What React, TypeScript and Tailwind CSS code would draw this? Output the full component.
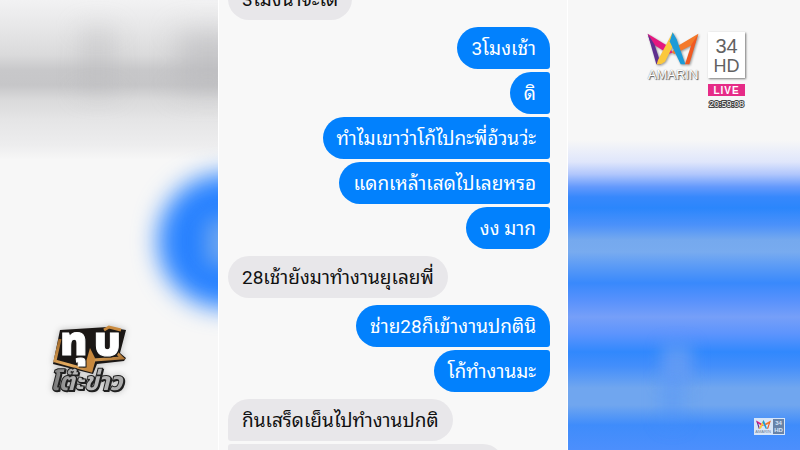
import clsx from "clsx"

type Message = {
    text: string
    mine?: boolean
    joinTop?: boolean
    joinBottom?: boolean
}

const groups: Message[][] = [
    [{ text: "3โมงน่าจะได้" }],
    [
        { text: "3โมงเช้า", mine: true, joinBottom: true },
        { text: "ดิ", mine: true, joinTop: true, joinBottom: true },
        { text: "ทำไมเขาว่าโก้ไปกะพี่อ้วนว่ะ", mine: true, joinTop: true, joinBottom: true },
        { text: "แดกเหล้าเสดไปเลยหรอ", mine: true, joinTop: true, joinBottom: true },
        { text: "งง มาก", mine: true, joinTop: true },
    ],
    [{ text: "28เช้ายังมาทำงานยุเลยพี่" }],
    [
        { text: "ช่าย28ก็เข้างานปกตินิ", mine: true, joinBottom: true },
        { text: "โก้ทำงานมะ", mine: true, joinTop: true },
    ],
    [{ text: "กินเสร็ดเย็นไปทำงานปกติ", joinBottom: true }],
]

function Bubble({ text, mine, joinTop, joinBottom }: Message) {
    return (
        <li
            className={clsx(
                "flex h-[42px] items-center rounded-[21px] px-[14px] pt-[2px] whitespace-nowrap",
                mine ? "self-end bg-[#0281fd] text-white" : "self-start bg-[#e8e7ea] text-[#111111]",
                mine && joinTop && "rounded-tr-[3px]",
                mine && joinBottom && "rounded-br-[3px]",
                !mine && joinTop && "rounded-tl-[3px]",
                !mine && joinBottom && "rounded-bl-[3px]",
            )}
        >
            {text}
        </li>
    )
}

function Chat() {
    return (
        <main className="overflow-hidden border-x border-white bg-[#f8f8f8] pr-[17px] pl-[9px]">
            <div className="-mt-[22px] flex flex-col gap-[7px] text-[19px] leading-[24px]">
                {groups.map((group, i) => (
                    <ul key={i} className="flex flex-col gap-[3px]">
                        {group.map((m) => (
                            <Bubble key={m.text} {...m} />
                        ))}
                        {i === groups.length - 1 && (
                            <li className="h-[42px] w-[276px] rounded-[21px] rounded-tl-[3px] bg-[#e8e7ea]" />
                        )}
                    </ul>
                ))}
            </div>
        </main>
    )
}

function Crown({ className }: { className: string }) {
    return (
        <svg viewBox="24 24 156 94" preserveAspectRatio="none" className={className} aria-hidden="true">
            <path d="M26 29 L90 66 L101 83 L88 86 L34 54Z" fill="#e5177f" />
            <path d="M178 29 L112 66 L98 82 L106 87 L168 57Z" fill="#f47a2b" />
            <path d="M26 29 L47 60 L66 116 L52 116Z" fill="#5f2f8f" />
            <path d="M178 29 L157 60 L138 116 L151 116Z" fill="#f05a22" />
            <path d="M66 116 L78 109 L109 50 L101 25 L57 104 L53 116Z" fill="#fbc83d" />
            <path d="M101 25 L113 45 L139 116 L125 116 L92 51Z" fill="#1c9bd8" />
        </svg>
    )
}

function ChannelLogo() {
    return (
        <div className="absolute top-[32px] right-[55px] flex gap-2 font-['Liberation_Sans',sans-serif]">
            <div className="flex w-[54px] flex-col items-center">
                <Crown className="h-[33px] w-[52px] drop-shadow-[1px_1px_1px_#999999]" />
                <span className="mt-px text-[13px] leading-[18px] text-white [text-shadow:1px_1px_1px_#555555,0_0_1px_#777777]">AMARIN</span>
            </div>
            <div className="flex w-[37px] flex-col items-center">
                <div className="flex h-[46px] w-full flex-col items-center justify-center bg-white text-[#626262] shadow-[1px_1px_2px_#777777]">
                    <span className="text-[20px] leading-[22px]">34</span>
                    <span className="text-[18px] leading-[18px]">HD</span>
                </div>
                <span className="mt-[6px] flex h-[12px] w-full items-center justify-center bg-[#e62b87] text-[10px] font-bold tracking-widest text-white">LIVE</span>
                <time className="mt-[2px] text-[9px] leading-[12px] text-white [paint-order:stroke] [-webkit-text-stroke:2px_#444444]">20:59:08</time>
            </div>
        </div>
    )
}

function ShowLogo() {
    return (
        <svg
            viewBox="0 0 95 85"
            className="absolute bottom-[50px] left-[40px] w-[95px] font-['Noto_Sans_Thai','Noto_Sans',sans-serif] drop-shadow-[0_0_3px_#bbbbbb]"
        >
            <defs>
                <linearGradient id="gold" x1="0" y1="0" x2="1" y2="1">
                    <stop offset="0" stopColor="#9c6425" />
                    <stop offset="0.5" stopColor="#e6ad61" />
                    <stop offset="1" stopColor="#8e561d" />
                </linearGradient>
                <linearGradient id="steel" x1="0" y1="0" x2="1" y2="0">
                    <stop offset="0" stopColor="#707070" />
                    <stop offset="0.4" stopColor="#c0c0c0" />
                    <stop offset="1" stopColor="#aaaaaa" />
                </linearGradient>
            </defs>
            <path d="M20 15 L68 12 L86 15 L80 38 L86 43 L84 46 L57 49 L53 59 L13 49Z" fill="#1b1715" />
            <path d="M20 24 L15 46 L51 56 L54 45 L82 43 L76 37" fill="none" stroke="url(#gold)" strokeWidth="3" />
            <path d="M64 15 L69 12 L81 15" fill="none" stroke="#c98a3f" strokeWidth="3" />
            <path d="M50 33 L55 43 L52 57 L44 54Z" fill="#c8883d" />
            <text
                x="20"
                y="40"
                fontSize="41"
                fontWeight="900"
                fill="white"
                stroke="white"
                className="drop-shadow-[1px_1px_0_#171717]"
            >
                ทุ<tspan x="54">บ</tspan>
            </text>
            <text x="10" y="75" fontSize="25" fontWeight="700" fontStyle="italic" fill="url(#steel)" stroke="#202020" strokeWidth="2" paintOrder="stroke" className="drop-shadow-[1px_1px_0_#202020]">โต๊ะข่าว</text>
        </svg>
    )
}

function Watermark() {
    return (
        <div className="absolute right-[15px] bottom-[15px] flex h-[17px] w-[31px] bg-[#d8e6f8] font-['Liberation_Sans',sans-serif] text-[#6d7f99]">
            <div className="flex flex-1 flex-col items-center justify-center">
                <Crown className="h-[9px] w-[15px]" />
                <span className="text-[4px] leading-[5px]">AMARIN</span>
            </div>
            <div className="m-px flex w-[11px] flex-col items-center justify-center bg-[#6883a8] text-[6px] leading-[7px] font-bold text-[#d8e6f8]">
                <span>34</span>
                <span>HD</span>
            </div>
        </div>
    )
}

export default function App() {
    return (
        <div
            lang="th"
            className="relative grid h-screen grid-cols-[218fr_350fr_232fr] overflow-hidden bg-[#f7f7f7] font-[Roboto,'Noto_Sans_Thai_Looped','Noto_Looped_Thai',Loma,Garuda,Waree,Umpush,'Droid_Sans_Thai','Noto_Serif_Thai',serif]"
        >
            {/* out of focus enlargement of the chat behind both sides */}
            <div className="relative overflow-hidden bg-[linear-gradient(#f2f2f3_0px,#e6e6e7_30px,#dadadb_55px,#c8c8ca_70px,#c6c6c8_85px,#dadadb_100px,#e5e5e6_120px,#ededee_145px,#f7f7f7_160px)]">
                <div className="absolute top-[28px] left-[80px] h-[65px] w-[36px] bg-[#b8b8bb]/40 blur-[12px]" />
                <div className="absolute top-[32px] -right-[20px] h-[58px] w-[60px] bg-[#b8b8bb]/60 blur-[14px]" />
                <div className="absolute top-[174px] left-[158px] h-[134px] w-[180px] rounded-full bg-[#2882ff] blur-[12px]" />
                <div className="absolute top-[220px] left-[206px] h-[45px] w-[40px] bg-[#7aadee]/80 blur-[10px]" />
            </div>
            <Chat />
            <div className="relative overflow-hidden bg-[linear-gradient(#f7f7f7_140px,#dfe6fb_162px,#b2c7fc_174px,#6399fc_187px,#3788fc_197px,#2b86fc_208px,#4b91fa_225px,#75a9ee_240px,#78abef_252px,#5b9bf6_266px,#3989fc_283px,#5791fc_300px,#769ff8_317px,#5c94fd_334px,#3188fd_352px,#438efb_366px,#70a6ef_388px,#70a6ef_405px,#3f8cfb_425px,#4c8ffc_450px)]">
                <div className="absolute top-[345px] left-[94px] h-[40px] w-[30px] bg-[#6a9ff3]/80 blur-[8px]" />
                <div className="absolute top-[378px] left-[96px] h-[45px] w-[16px] bg-[#4a91fb]/50 blur-[10px]" />
            </div>
            <ChannelLogo />
            <ShowLogo />
            <Watermark />
        </div>
    )
}
